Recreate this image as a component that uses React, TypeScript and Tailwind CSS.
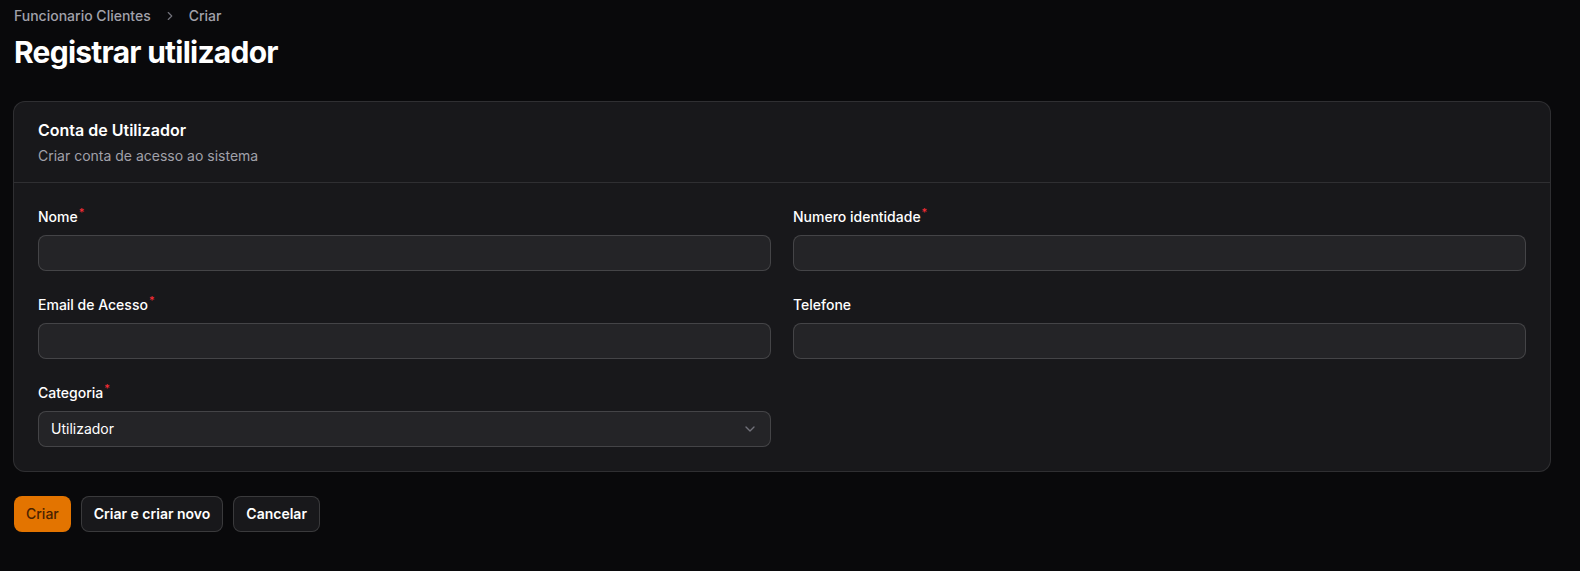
import { ChevronRight, ChevronDown } from 'lucide-react';

function Label({ text, required }: { text: string; required?: boolean }) {
  return (
    <label className="h-5 text-sm leading-5 font-medium text-white">
      {text}
      {required && (
        <span className="relative -top-[6px] ml-[1px] text-[11px] leading-none font-medium text-red-500">*</span>
      )}
    </label>
  );
}

function Field({ label, required }: { label: string; required?: boolean }) {
  return (
    <div className="flex flex-col gap-2">
      <Label text={label} required={required} />
      <input
        type="text"
        className="h-9 w-full rounded-lg border border-white/15 bg-[#242427] px-3 text-sm text-white outline-none"
      />
    </div>
  );
}

export default function App() {
  return (
    <div
      className="min-h-[571px] w-full bg-[#09090b] px-[13px] pt-[6px]"
      style={{ fontFamily: 'Inter, "Noto Sans", sans-serif' }}
    >
      <nav className="flex items-center gap-3 text-sm leading-5 font-medium text-[#a1a1aa] pl-[1px]">
        <span>Funcionario Clientes</span>
        <ChevronRight size={14} className="text-[#71717a]" />
        <span>Criar</span>
      </nav>
      <h1 className="mt-[8px] text-[30px] leading-9 font-bold tracking-tight text-white pl-[1px]">
        Registrar utilizador
      </h1>

      <div className="mt-[31px] w-[1538px] rounded-xl border border-white/10 bg-[#18181b]">
        <div className="px-6 py-4">
          <h2 className="text-base leading-6 font-semibold text-white">Conta de Utilizador</h2>
          <p className="mt-1 text-sm leading-5 text-[#a1a1aa]">Criar conta de acesso ao sistema</p>
        </div>
        <div className="border-t border-white/10 p-6">
          <div className="grid grid-cols-2 gap-x-[22px] gap-y-6">
            <Field label="Nome" required />
            <Field label="Numero identidade" required />
            <Field label="Email de Acesso" required />
            <Field label="Telefone" />
            <div className="flex flex-col gap-2">
              <Label text="Categoria" required />
              <div className="flex h-9 w-full items-center justify-between rounded-lg border border-white/15 bg-[#242427] pl-3 pr-3">
                <span className="text-sm text-white">Utilizador</span>
                <ChevronDown size={16} className="text-[#71717a]" />
              </div>
            </div>
          </div>
        </div>
      </div>

      <div className="mt-6 flex gap-[10px] pl-[1px]">
        <button className="h-9 rounded-lg bg-[#e37400] px-3 text-sm font-medium text-[#4a2200]">
          Criar
        </button>
        <button className="h-9 rounded-lg border border-white/15 bg-[#18181b] px-3 text-sm font-semibold text-white">
          Criar e criar novo
        </button>
        <button className="h-9 rounded-lg border border-white/15 bg-[#18181b] px-3 text-sm font-semibold text-white">
          Cancelar
        </button>
      </div>
    </div>
  );
}
